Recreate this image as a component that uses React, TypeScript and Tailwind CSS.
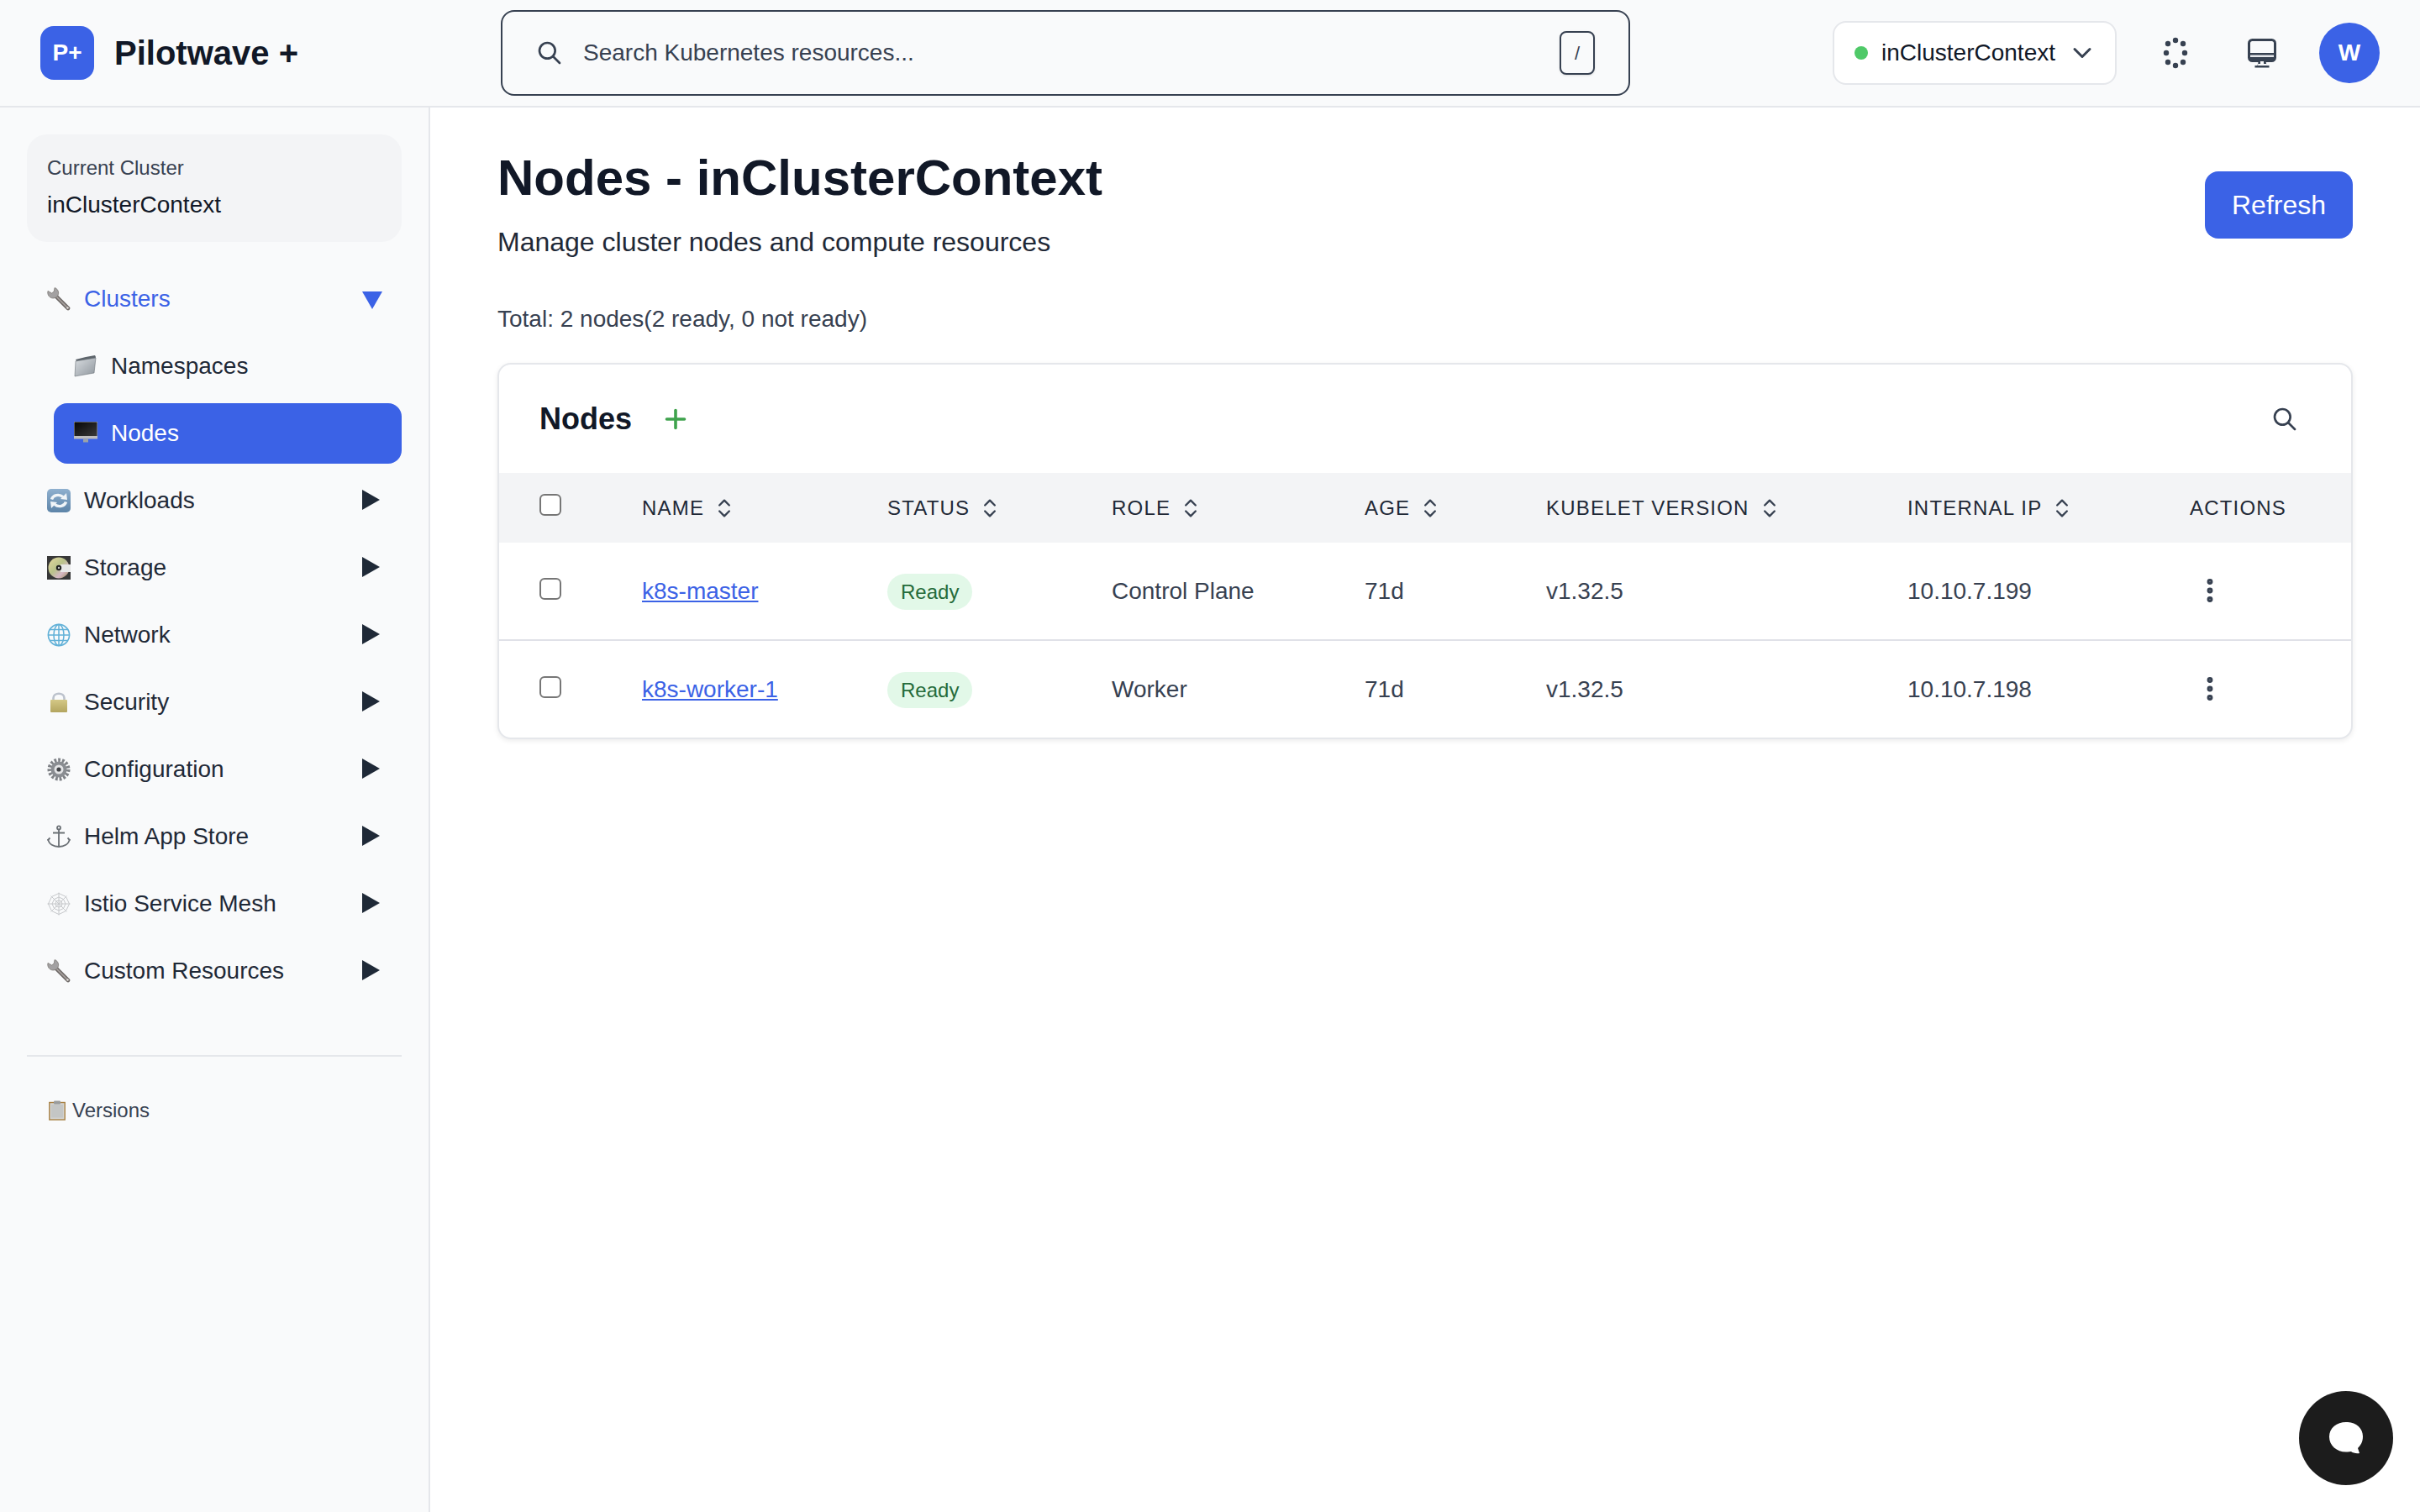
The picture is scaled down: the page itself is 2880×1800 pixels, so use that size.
import { ChevronDown, ChevronsUpDown, EllipsisVertical, Plus } from "lucide-react";
import type { ReactNode } from "react";

const SearchIcon = () => (
  <svg viewBox="0 0 24 24" className="h-8 w-8 shrink-0" fill="none" stroke="#374151" strokeWidth="2" strokeLinecap="round" strokeLinejoin="round">
    <path d="M21 21l-6-6m2-5a7 7 0 11-14 0 7 7 0 0114 0z" />
  </svg>
);

const DotsIcon = () => (
  <svg viewBox="0 0 40 40" className="h-10 w-10 shrink-0 fill-[#374151]">
    <circle cx="20" cy="5" r="3.2" />
    <circle cx="11" cy="9" r="3.2" />
    <circle cx="29" cy="9" r="3.2" />
    <circle cx="9" cy="20" r="3.2" />
    <circle cx="31" cy="20" r="3.2" />
    <circle cx="11" cy="31" r="3.2" />
    <circle cx="29" cy="31" r="3.2" />
    <circle cx="20" cy="35" r="3.2" />
  </svg>
);

const MonitorIcon = () => (
  <svg viewBox="0 0 40 40" className="h-10 w-10 shrink-0">
    <rect x="4.5" y="4.5" width="31" height="25" rx="4" fill="none" stroke="#374151" strokeWidth="3" />
    <rect x="4.5" y="20" width="31" height="9" fill="#374151" />
    <rect x="6" y="22.5" width="28" height="2.5" fill="#e5e7eb" />
    <path d="M15.5 30 H24.5 L25.5 35 H15 Z M15 33 L14.5 35 H11.5 V37.5 H28.5 V35 H25.5 L25 33" fill="#374151" />
    <rect x="18" y="30" width="4" height="4" fill="#f9fafb" />
  </svg>
);

const Wrench = () => (
  <svg viewBox="0 0 28 28" className="h-7 w-7 shrink-0">
    <path d="M10 10 L25 25" stroke="#6f6a68" strokeWidth="4.6" strokeLinecap="round" />
    <path d="M11 11 L24 24" stroke="#aaa4a1" strokeWidth="1.6" strokeLinecap="round" />
    <path d="M9 0.6 L8.2 5 L5.6 7 L1 4.4 C-0.2 8.8 3 13 7.2 13 C11.5 13 14 9.5 13.6 6 C13.2 3.2 11.5 1.2 9 0.6 Z" fill="#a3a1a2" stroke="#77726f" strokeWidth="0.7" />
    <circle cx="24.5" cy="24.5" r="1.2" fill="#e5e1de" />
  </svg>
);

const Folder = () => (
  <svg viewBox="0 0 28 28" className="h-7 w-7 shrink-0">
    <defs>
      <linearGradient id="folderFill" x1="0" y1="0" x2="1" y2="1">
        <stop offset="0" stopColor="#d9dde1" />
        <stop offset="1" stopColor="#8f969d" />
      </linearGradient>
    </defs>
    <path d="M2 6 L14 3 L25 1 L26 3 L25 6 L3 8 Z" fill="#5d646b" />
    <path d="M2 8 L26 4 L24 22 L1 26 Z" fill="url(#folderFill)" stroke="#6d747b" strokeWidth="0.6" />
  </svg>
);

const Desktop = () => (
  <svg viewBox="0 0 28 28" className="h-7 w-7 shrink-0">
    <defs>
      <linearGradient id="screenFill" x1="0" y1="0" x2="1" y2="1">
        <stop offset="0" stopColor="#050505" />
        <stop offset="1" stopColor="#3b3b3b" />
      </linearGradient>
    </defs>
    <rect x="0" y="0" width="28" height="18" fill="url(#screenFill)" stroke="#d5d5d5" strokeWidth="0.8" />
    <rect x="0" y="17" width="28" height="3.5" fill="#bcbcbc" />
    <rect x="11" y="20.5" width="6" height="4" fill="#9ca3a8" />
  </svg>
);

const Sync = () => (
  <svg viewBox="0 0 28 28" className="h-7 w-7 shrink-0">
    <defs>
      <linearGradient id="syncFill" x1="0" y1="0" x2="0" y2="1">
        <stop offset="0" stopColor="#8fb0cf" />
        <stop offset="1" stopColor="#5d84a8" />
      </linearGradient>
    </defs>
    <rect width="28" height="28" rx="5" fill="url(#syncFill)" />
    <path d="M5.5 12.5 C7 7.5 14 5.5 19 9.5" fill="none" stroke="#f1f5f8" strokeWidth="3.4" />
    <path d="M22.5 15.5 C21 20.5 14 22.5 9 18.5" fill="none" stroke="#f1f5f8" strokeWidth="3.4" />
    <path d="M16 12 L24 13 L23 5 Z M12 16 L4 15 L5 23 Z" fill="#f1f5f8" />
  </svg>
);

const Disc = () => (
  <svg viewBox="0 0 28 28" className="h-7 w-7 shrink-0">
    <defs>
      <linearGradient id="discFill" x1="0" y1="0" x2="1" y2="1">
        <stop offset="0" stopColor="#e6d9a0" />
        <stop offset="0.45" stopColor="#b9c28a" />
        <stop offset="0.7" stopColor="#d5b7c4" />
        <stop offset="1" stopColor="#9c8a54" />
      </linearGradient>
    </defs>
    <rect width="28" height="28" fill="#373737" />
    <circle cx="14" cy="14" r="12.5" fill="url(#discFill)" />
    <rect x="16" y="10" width="12" height="9" fill="#e7e7e7" />
    <circle cx="14" cy="14" r="3.2" fill="#1f1f1f" />
    <circle cx="14" cy="14" r="1.2" fill="#c9c9c9" />
  </svg>
);

const Globe = () => (
  <svg viewBox="0 0 28 28" className="h-7 w-7 shrink-0" fill="none" stroke="#62b1d8" strokeWidth="1.5">
    <circle cx="14" cy="14" r="12.6" strokeWidth="1.7" />
    <ellipse cx="14" cy="14" rx="6" ry="12.6" />
    <path d="M14 1.4 V26.6 M1.4 14 H26.6 M3.4 7.5 H24.6 M3.4 20.5 H24.6" />
  </svg>
);

const Lock = () => (
  <svg viewBox="0 0 28 28" className="h-7 w-7 shrink-0">
    <defs>
      <linearGradient id="lockFill" x1="0" y1="0" x2="0" y2="1">
        <stop offset="0" stopColor="#d4c886" />
        <stop offset="1" stopColor="#b3a55f" />
      </linearGradient>
    </defs>
    <path d="M7.5 13 V9 C7.5 2 20.5 2 20.5 9 V13" fill="none" stroke="#bcc2cc" strokeWidth="2.6" />
    <rect x="4" y="11" width="20" height="15" rx="1" fill="url(#lockFill)" />
  </svg>
);

const Gear = () => (
  <svg viewBox="0 0 28 28" className="h-7 w-7 shrink-0">
    <circle cx="14" cy="14" r="10.5" fill="none" stroke="#7f8287" strokeWidth="6" strokeDasharray="2.6 1.8" />
    <circle cx="14" cy="14" r="9.5" fill="#8a8d92" />
    <circle cx="14" cy="14" r="5.5" fill="#e3e4e6" />
    <circle cx="14" cy="14" r="2.6" fill="#3f4145" />
  </svg>
);

const Anchor = () => (
  <svg viewBox="0 0 28 28" className="h-7 w-7 shrink-0" fill="none" stroke="#6b7075" strokeWidth="1.8">
    <circle cx="14" cy="3.4" r="2" />
    <path d="M14 5.5 V26 M7 9.5 H21 M1.2 17 C2 23 8 26 14 26 C20 26 26 23 26.8 17" />
    <path d="M0.6 18.5 L3.5 15.5 M27.4 18.5 L24.5 15.5" />
  </svg>
);

const Web = () => (
  <svg viewBox="0 0 28 28" className="h-7 w-7 shrink-0" fill="none" stroke="#c6c8cb" strokeWidth="1">
    <path d="M14 0.5 V27.5 M0.5 14 H27.5 M4.5 4.5 L23.5 23.5 M23.5 4.5 L4.5 23.5" />
    <path d="M14 1.5 L22.5 5.5 L26.5 14 L22.5 22.5 L14 26.5 L5.5 22.5 L1.5 14 L5.5 5.5 Z" />
    <path d="M14 6 L19.5 8.5 L22 14 L19.5 19.5 L14 22 L8.5 19.5 L6 14 L8.5 8.5 Z" />
    <path d="M14 10 L17 11 L18 14 L17 17 L14 18 L11 17 L10 14 L11 11 Z" />
  </svg>
);

const Clipboard = () => (
  <svg viewBox="0 0 20 24" className="h-6 w-5 shrink-0">
    <rect x="0.8" y="2.5" width="18.4" height="20.5" fill="#d2d3d1" stroke="#a98245" strokeWidth="1.4" />
    <rect x="3" y="5" width="14" height="15.5" fill="#c4c6c5" />
    <rect x="6" y="0.5" width="8" height="4" rx="1" fill="#9a9c9c" />
  </svg>
);

const Triangle = ({ open }: { open?: boolean }) =>
  open ? (
    <svg viewBox="0 0 24 21" className="mt-[2px] h-[21px] w-6 fill-[#3b62e6]">
      <path d="M0 0 H24 L12 21 Z" />
    </svg>
  ) : (
    <svg viewBox="0 0 21 24" className="-mt-[2px] h-6 w-[21px] fill-[#1f2937]">
      <path d="M0 0 L21 12 L0 24 Z" />
    </svg>
  );

const navItems: { label: string; icon: ReactNode }[] = [
  { label: "Workloads", icon: <Sync /> },
  { label: "Storage", icon: <Disc /> },
  { label: "Network", icon: <Globe /> },
  { label: "Security", icon: <Lock /> },
  { label: "Configuration", icon: <Gear /> },
  { label: "Helm App Store", icon: <Anchor /> },
  { label: "Istio Service Mesh", icon: <Web /> },
  { label: "Custom Resources", icon: <Wrench /> },
];

const columns = ["Name", "Status", "Role", "Age", "Kubelet Version", "Internal IP"];

const nodes = [
  { name: "k8s-master", role: "Control Plane", ip: "10.10.7.199" },
  { name: "k8s-worker-1", role: "Worker", ip: "10.10.7.198" },
];

function Checkbox() {
  return <div className="h-[26px] w-[26px] rounded-[6px] border-2 border-[#767676] bg-white" />;
}

function Sidebar() {
  return (
    <aside className="flex w-[512px] shrink-0 flex-col border-r-2 border-[#e5e7eb] bg-[#f9fafb] pl-8 pr-8 pt-8">
      <div className="flex h-[128px] flex-col rounded-3xl bg-[#f3f4f6] px-6 pt-[24px]">
        <p className="text-[24px] leading-[32px] text-[#374151]">Current Cluster</p>
        <p className="mt-[8px] text-[28px] leading-[40px] text-[#111827]">inClusterContext</p>
      </div>

      <nav className="mt-8 flex flex-col gap-2">
        <div className="flex h-[72px] items-center pl-6 pr-[23px] text-[28px] text-[#3b62e6]">
          <Wrench />
          <span className="ml-4 flex-1">Clusters</span>
          <Triangle open />
        </div>
        <div className="ml-8 flex h-[72px] items-center rounded-2xl pl-6 text-[28px] text-[#1f2937]">
          <Folder />
          <span className="ml-[16px]">Namespaces</span>
        </div>
        <div className="ml-8 flex h-[72px] items-center rounded-2xl bg-[#3b62e6] pl-6 text-[28px] text-white">
          <Desktop />
          <span className="ml-[16px]">Nodes</span>
        </div>
        {navItems.map((item) => (
          <div key={item.label} className="flex h-[72px] items-center pl-6 pr-[26px] text-[28px] text-[#1f2937]">
            {item.icon}
            <span className="ml-4 flex-1">{item.label}</span>
            <Triangle />
          </div>
        ))}
      </nav>

      <div className="mt-[64px] border-t-2 border-[#e5e7eb] pl-[26px] pt-[48px]">
        <div className="flex items-center gap-2 text-[24px] leading-8 text-[#374151]">
          <Clipboard />
          <span>Versions</span>
        </div>
      </div>
    </aside>
  );
}

function NodesTable() {
  return (
    <div className="mt-[32px] overflow-hidden rounded-2xl border-2 border-[#e5e7eb] bg-white shadow-[0_2px_6px_rgba(0,0,0,0.08)]">
      <div className="flex h-[129px] items-center pl-[48px] pr-[63px]">
        <h2 className="text-[36px] font-bold text-[#111827]">Nodes</h2>
        <Plus className="ml-[34px] h-9 w-9 text-[#3fa34d]" strokeWidth={2.4} />
        <div className="ml-auto">
          <SearchIcon />
        </div>
      </div>
      <table className="w-full table-fixed border-collapse">
        <colgroup>
          <col className="w-[170px]" />
          <col className="w-[292px]" />
          <col className="w-[267px]" />
          <col className="w-[301px]" />
          <col className="w-[216px]" />
          <col className="w-[430px]" />
          <col className="w-[336px]" />
          <col />
        </colgroup>
        <thead>
          <tr className="h-[83px] bg-[#f3f4f6]">
            <th className="pb-[8px] pl-[48px] text-left">
              <Checkbox />
            </th>
            {columns.map((col) => (
              <th key={col} className="text-left text-[24px] font-normal uppercase tracking-[1.2px] text-[#1f2937]">
                <span className="inline-flex items-center gap-[10px]">
                  {col}
                  <ChevronsUpDown className="h-7 w-7 text-[#374151]" strokeWidth={2} />
                </span>
              </th>
            ))}
            <th className="text-left text-[24px] font-normal uppercase tracking-[1.2px] text-[#1f2937]">Actions</th>
          </tr>
        </thead>
        <tbody>
          {nodes.map((node, i) => (
            <tr key={node.name} className={i === 0 ? "h-[116px] border-b-2 border-[#e0e1e8]" : "h-[116px]"}>
              <td className="pb-[6px] pl-[48px]">
                <Checkbox />
              </td>
              <td className="text-[28px] text-[#3b62e6] underline">{node.name}</td>
              <td className="pt-[2px]">
                <span className="inline-block h-[43px] rounded-full bg-[#e2f8e8] px-4 text-[24px] leading-[43px] text-[#256b3a]">Ready</span>
              </td>
              <td className="text-[28px] text-[#374151]">{node.role}</td>
              <td className="text-[28px] text-[#374151]">71d</td>
              <td className="text-[28px] text-[#374151]">v1.32.5</td>
              <td className="text-[28px] text-[#374151]">{node.ip}</td>
              <td className="pb-[2px] pl-[6px]">
                <EllipsisVertical className="h-9 w-9 text-[#374151]" strokeWidth={2.6} />
              </td>
            </tr>
          ))}
        </tbody>
      </table>
    </div>
  );
}

export default function App() {
  return (
    <div className="relative flex h-[1800px] w-[2880px] flex-col overflow-hidden bg-white font-['Liberation_Sans',Arial,sans-serif]">
      <header className="flex h-[128px] shrink-0 items-center border-b-2 border-[#e5e7eb] bg-[#f9fafb] pl-12 pr-12">
        <div className="flex h-16 w-16 items-center justify-center rounded-2xl bg-[#3b62e6] text-[28px] font-bold text-white">P+</div>
        <span className="ml-[24px] w-[460px] text-[40px] font-bold text-[#111827]">Pilotwave +</span>
        <div className="flex h-[102px] w-[1344px] items-center rounded-2xl border-2 border-[#374151] bg-[#f9fafb] pl-[40px] pr-[40px]">
          <SearchIcon />
          <span className="ml-[24px] flex-1 text-[28px] text-[#374151]">Search Kubernetes resources...</span>
          <kbd className="flex h-[52px] w-[42px] items-center justify-center rounded-lg border-2 border-[#374151] bg-[#f9fafb] font-['Liberation_Sans',sans-serif] text-[22px] text-[#374151] shadow-sm">/</kbd>
        </div>
        <div className="ml-auto flex h-[76px] w-[338px] items-center rounded-2xl border-2 border-[#e5e7eb] bg-white pl-[24px]">
          <span className="h-4 w-4 rounded-full bg-[#4fc968]" />
          <span className="ml-[16px] text-[28px] text-[#111827]">inClusterContext</span>
          <ChevronDown className="ml-[14px] h-9 w-9 text-[#374151]" strokeWidth={2} />
        </div>
        <div className="ml-[50px]">
          <DotsIcon />
        </div>
        <div className="ml-[63px]">
          <MonitorIcon />
        </div>
        <div className="ml-[48px] flex h-[72px] w-[72px] items-center justify-center rounded-full bg-[#3b62e6] text-[28px] font-bold text-white">W</div>
      </header>

      <div className="flex min-h-0 flex-1">
        <Sidebar />
        <main className="flex-1 pl-[80px] pr-[80px] pt-[48px]">
          <div className="flex items-start justify-between">
            <div>
              <h1 className="text-[60px] font-bold leading-[72px] text-[#111827]">Nodes - inClusterContext</h1>
              <p className="mt-[16px] text-[32px] leading-[48px] text-[#1f2937]">Manage cluster nodes and compute resources</p>
            </div>
            <button className="mt-[28px] h-[80px] w-[176px] rounded-2xl bg-[#3b62e6] text-[32px] text-white">Refresh</button>
          </div>
          <p className="mt-[48px] text-[28px] leading-[40px] text-[#374151]">Total: 2 nodes(2 ready, 0 not ready)</p>
          <NodesTable />
        </main>
      </div>

      <button className="absolute left-[2736px] top-[1656px] flex h-[112px] w-[112px] items-center justify-center rounded-full bg-[#1c1c1c]">
        <svg viewBox="0 0 40 38" className="h-[38px] w-[40px] fill-white">
          <path d="M20 0 C31 0 40 6.5 40 17 C40 24 37 28 34 31 L36 37 C32 37.6 28 36.6 26 35 C24 35.4 22 35.5 20 35.5 C9 35.5 0 28 0 17.5 C0 7 9 0 20 0 Z" />
        </svg>
      </button>
    </div>
  );
}
